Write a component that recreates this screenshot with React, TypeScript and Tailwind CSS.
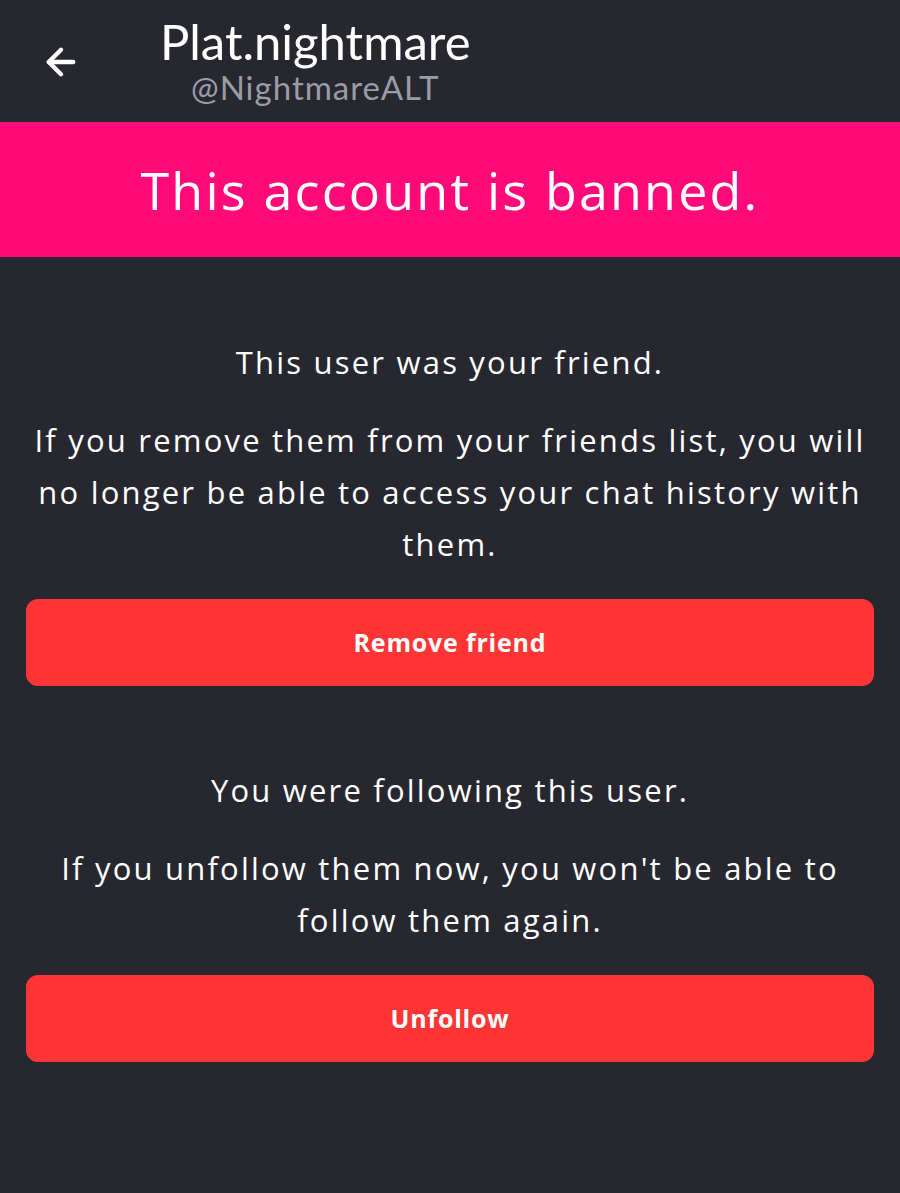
import { ArrowLeft } from 'lucide-react'

function Notice({ title, body, action }: { title: string; body: string; action: string }) {
  return (
    <section className="flex flex-col items-center">
      <p className="text-[31px] leading-[52px] tracking-[2.2px] text-white text-center">{title}</p>
      <p className="mt-[26px] px-[2px] text-[31px] leading-[52px] tracking-[2.2px] text-white text-center">{body}</p>
      <button className="mt-[29px] w-full h-[87px] rounded-[12px] bg-[#ff3535] text-white text-[25px] tracking-[0.8px] font-bold">
        {action}
      </button>
    </section>
  )
}

export default function App() {
  return (
    <div className="min-h-[1193px] bg-[#272730] font-['Open_Sans',sans-serif]">
      <header className="h-[122px] flex items-center font-['Lato',sans-serif]">
        <button className="ml-[40px] mt-[2px] text-white">
          <ArrowLeft size={42} strokeWidth={2.5} />
        </button>
        <div className="ml-[78px] mt-[8px] flex flex-col items-center">
          <h1 className="text-[49px] leading-[42px] text-white">Plat.nightmare</h1>
          <p className="mt-[2px] text-[33px] leading-[46px] tracking-[1px] text-[#9b9ca6]">@NightmareALT</p>
        </div>
      </header>

      <div className="h-[135px] bg-[#ff0a78] flex items-center justify-center">
        <p className="text-[52px] tracking-[2.2px] text-white">This account is banned.</p>
      </div>

      <main className="px-[26px] pt-[79px] flex flex-col gap-[78px]">
        <Notice
          title="This user was your friend."
          body="If you remove them from your friends list, you will no longer be able to access your chat history with them."
          action="Remove friend"
        />
        <Notice
          title="You were following this user."
          body="If you unfollow them now, you won't be able to follow them again."
          action="Unfollow"
        />
      </main>
    </div>
  )
}
